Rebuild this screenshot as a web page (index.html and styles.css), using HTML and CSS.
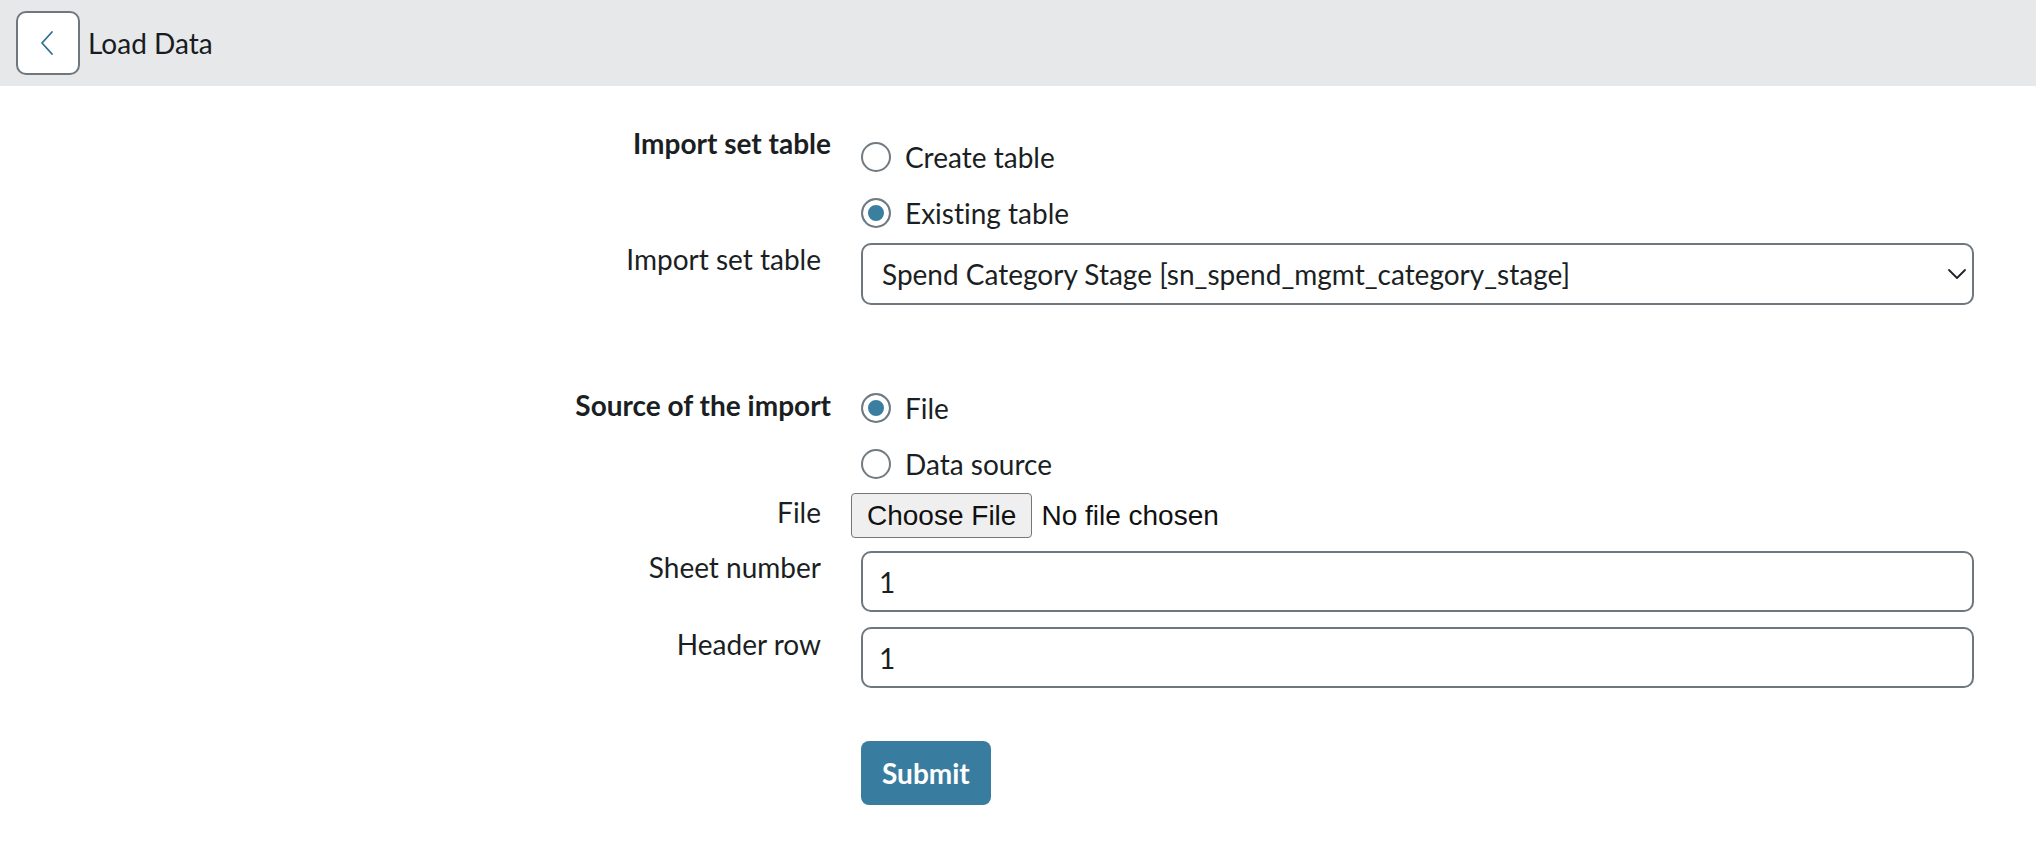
FILE: index.html
```html
<!DOCTYPE html>
<html lang="en">
<head>
    <meta charset="UTF-8">
    <meta name="viewport" content="width=device-width, initial-scale=1.0">
    <title>Load Data</title>
    <link rel="stylesheet" href="styles.css">
</head>
<body>

    <!-- Top bar with back button -->
    <header class="topbar">
        <button class="back-btn" type="button" aria-label="Back">
            <svg width="22" height="30" viewBox="0 0 22 30">
                <path d="M15 4 L5 15 L15 26" fill="none" stroke="#2f6f8f" stroke-width="1.8" stroke-linecap="round" stroke-linejoin="round"/>
            </svg>
        </button>
        <h1 class="page-title">Load Data</h1>
    </header>

    <form class="load-form">

        <!-- Import set table choice -->
        <div class="row row-table-choice">
            <div class="field-label legend">Import set table</div>
            <div class="field radio-group">
                <label class="radio-option"><input type="radio" name="tableMode" value="create"> Create table</label>
                <label class="radio-option"><input type="radio" name="tableMode" value="existing" checked> Existing table</label>
            </div>
        </div>

        <div class="row row-select">
            <label class="field-label" for="importTable">Import set table</label>
            <div class="field select-wrap">
                <select id="importTable">
                    <option>Spend Category Stage [sn_spend_mgmt_category_stage]</option>
                </select>
                <svg class="select-arrow" width="20" height="12" viewBox="0 0 20 12">
                    <path d="M2 2 L10 10 L18 2" fill="none" stroke="#1f2328" stroke-width="1.8" stroke-linecap="round" stroke-linejoin="round"/>
                </svg>
            </div>
        </div>

        <!-- Source of the import -->
        <div class="row row-source">
            <div class="field-label legend">Source of the import</div>
            <div class="field radio-group">
                <label class="radio-option"><input type="radio" name="source" value="file" checked> File</label>
                <label class="radio-option"><input type="radio" name="source" value="datasource"> Data source</label>
            </div>
        </div>

        <div class="row row-file">
            <label class="field-label" for="fileInput">File</label>
            <div class="field">
                <input type="file" id="fileInput">
            </div>
        </div>

        <div class="row row-sheet">
            <label class="field-label" for="sheetNumber">Sheet number</label>
            <div class="field">
                <input type="text" id="sheetNumber" class="text-input" value="1">
            </div>
        </div>

        <div class="row row-header">
            <label class="field-label" for="headerRow">Header row</label>
            <div class="field">
                <input type="text" id="headerRow" class="text-input" value="1">
            </div>
        </div>

        <div class="row row-submit">
            <div class="field-label"></div>
            <div class="field">
                <button type="submit" class="submit-btn">Submit</button>
            </div>
        </div>

    </form>

</body>
</html>
```

FILE: styles.css
```css
body {
    margin: 0;
    padding: 0;
    font-family: 'Lato', 'Noto Sans', sans-serif;
    font-size: 28px;
    font-variant-ligatures: no-common-ligatures;
    color: #1b1f24;
    background-color: #fff;
}

/* Top bar */
.topbar {
    height: 86px;
    background-color: #e6e8ea;
    display: flex;
    align-items: center;
    padding-left: 16px;
    box-sizing: border-box;
}

.back-btn {
    width: 64px;
    height: 64px;
    box-sizing: border-box;
    border: 2px solid #6e777d;
    border-radius: 10px;
    background-color: #fff;
    display: flex;
    align-items: center;
    justify-content: center;
    padding: 0;
    cursor: pointer;
}

.page-title {
    margin: 0 0 0 8px;
    font-size: 28px;
    font-weight: normal;
    color: #181c21;
}

/* Form layout: label column + control column */
.load-form {
    display: flex;
    flex-direction: column;
}

.row {
    display: flex;
    align-items: flex-start;
}

.field-label {
    width: 821px;
    flex-shrink: 0;
    text-align: right;
    line-height: 32px;
}

.field {
    width: 1113px;
    margin-left: 40px;
}

/* Group headings sit a little further right than plain labels */
.legend {
    width: 831px;
    font-weight: bold;
}

.legend + .field {
    margin-left: 30px;
}

.row-table-choice { margin-top: 41px; }
.row-table-choice .radio-group { margin-top: 8px; }
.row-select { margin-top: 8px; }
.row-source { margin-top: 81px; }
.row-source .field-label { padding-top: 3px; }
.row-file { margin-top: 7px; }
.row-file .field-label { padding-top: 3px; }
.row-file .field { margin-left: 30px; }
.row-sheet { margin-top: 13px; }
.row-header { margin-top: 15px; }
.row-header .field-label { padding-top: 1px; }
.row-submit { margin-top: 53px; }

/* Radio buttons */
.radio-group {
    display: flex;
    flex-direction: column;
    gap: 12px;
}

.radio-option {
    display: flex;
    align-items: center;
    height: 44px;
    gap: 14px;
    cursor: pointer;
}

.radio-option input {
    appearance: none;
    width: 30px;
    height: 30px;
    margin: 0;
    border: 2px solid #707a80;
    border-radius: 50%;
    background-color: #fff;
    box-sizing: border-box;
}

.radio-option input:checked {
    background-color: #3a7ea0;
    box-shadow: inset 0 0 0 5px #fff;
}

/* Select */
.select-wrap {
    position: relative;
}

select {
    appearance: none;
    width: 100%;
    height: 62px;
    padding: 0 50px 0 19px;
    border: 2px solid #6e777d;
    border-radius: 10px;
    background-color: #fff;
    font-family: 'Lato', 'Noto Sans', sans-serif;
    font-size: 28px;
    color: #1b1f24;
}

.select-arrow {
    position: absolute;
    right: 7px;
    top: 25px;
    pointer-events: none;
}

/* File input */
input[type="file"] {
    font-family: 'Liberation Sans', Arial, sans-serif;
    font-size: 28px;
    color: #111;
}

input[type="file"]::file-selector-button {
    font-family: 'Liberation Sans', Arial, sans-serif;
    font-size: 28px;
    height: 45px;
    padding: 0 15px;
    margin-right: 9px;
    background-color: #efefef;
    border: 1px solid #767676;
    border-radius: 4px;
    color: #111;
}

/* Text inputs */
.text-input {
    width: 100%;
    height: 61px;
    box-sizing: border-box;
    padding: 0 16px;
    border: 2px solid #6e777d;
    border-radius: 10px;
    font-family: 'Lato', 'Noto Sans', sans-serif;
    font-size: 28px;
    color: #1b1f24;
}

/* Submit */
.submit-btn {
    height: 64px;
    padding: 0 21px;
    background-color: #387d9f;
    color: #fff;
    border: none;
    border-radius: 8px;
    font-family: 'Lato', 'Noto Sans', sans-serif;
    font-size: 28px;
    font-weight: bold;
    cursor: pointer;
}
```
